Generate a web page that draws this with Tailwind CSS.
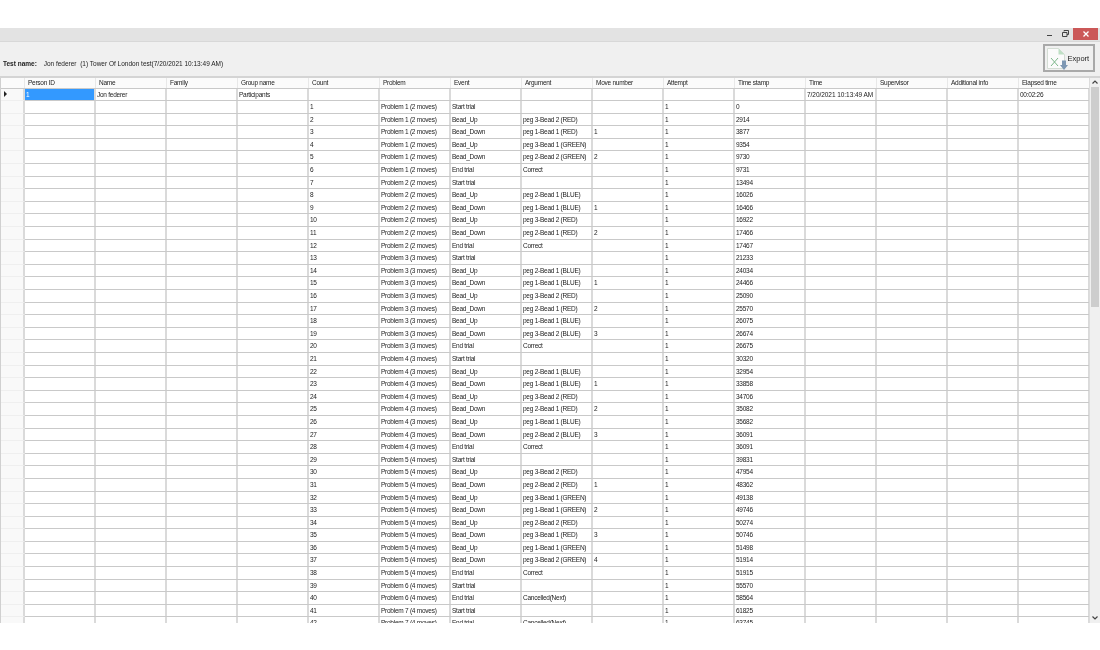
<!DOCTYPE html>
<html lang="en">

<head>
    <meta charset="UTF-8">
    <title>Export results</title>
    <script src="https://cdn.jsdelivr.net/npm/@tailwindcss/browser@4"></script>
</head>

<body class="bg-white text-[#222] font-['Liberation_Sans',sans-serif] overflow-hidden">
    <div class="h-[650px] w-[1100px] flex flex-col pt-[28px] blur-[0.3px]">
        <!-- Title bar -->
        <div class="h-[13px] bg-[#e3e3e3] flex items-start justify-end shrink-0">
            <div class="w-[12px] h-[11px] mr-[3px] flex items-center justify-center">
                <span class="block w-[5px] h-[1px] bg-[#444] mt-[3px]"></span>
            </div>
            <div class="w-[14px] h-[11px] flex items-center justify-center mr-[1px]">
                <svg width="7" height="7" viewBox="0 0 7 7" fill="none" stroke="#444" stroke-width="1"><path d="M2 1.500v-1h4.500v4h-1.500M0.500 2.500h4.500v4h-4.500z"/></svg>
            </div>
            <div class="w-[25px] h-[11.500px] mr-[2px] bg-[#cb5858] flex items-center justify-center">
                <svg width="6" height="6" viewBox="0 0 6 6" stroke="#fff" stroke-width="1.300"><path d="M0.500 0.500l5 5M5.500 0.500l-5 5"/></svg>
            </div>
        </div>

        <!-- Test name panel -->
        <div class="h-[35px] bg-[#f0f0f0] border-t border-[#d8d8d8] flex items-start justify-between shrink-0">
            <div class="pl-[3px] pt-[16.500px] text-[6.500px] leading-[10px]">
                <span class="font-bold mr-[5px]">Test name:</span> Jon federer&nbsp; (1) Tower Of London test(7/20/2021 10:13:49 AM)
            </div>
            <button class="w-[52px] h-[28px] mt-[2px] mr-[5px] border-2 border-[#a9a9a9] bg-[#f0f0f0] flex items-center pl-[2px] text-[7.500px]">
                <svg class="shrink-0" width="21" height="23" viewBox="0 0 21 23" fill="none">
                    <path d="M0.500 1.500h11l6 6v14h-17z" fill="#fbfbfb" stroke="#d4ddd4"/>
                    <path d="M11.500 1.500v6h6z" fill="#bfe0c5"/>
                    <path d="M4 11l7 8M11 11l-7 8" stroke="#7cb78a" stroke-width="1"/>
                    <path d="M15 13.500h4v4.500h2l-4 5l-4-5h2z" fill="#7d97b3"/>
                </svg>
                <span class="-ml-[0.500px] mt-[1px]">Export</span>
            </button>
        </div>

        <!-- Grid -->
        <div class="relative h-[546.500px] w-[1100px] shrink-0 overflow-hidden border-t-2 border-[#d4d4d4]">
            <div id="grid" class="w-[1089.500px] flex flex-col text-[6.500px] tracking-[-0.25px] border-l border-[#d0d0d0]"></div>
            <!-- Scrollbar -->
            <div class="absolute top-0 right-0 bottom-0 w-[11px] bg-[#f0f0f0] border-l border-[#dcdcdc] flex flex-col">
                <div class="h-[8.500px] flex items-center justify-center shrink-0">
                    <svg width="6" height="4" viewBox="0 0 6 4" fill="none" stroke="#444" stroke-width="1.200"><path d="M0.500 3.500l2.500-2.500l2.500 2.500"/></svg>
                </div>
                <div class="h-[220px] w-[8.500px] ml-[0.500px] bg-[#cdcdcd] shrink-0"></div>
                <div class="flex-1"></div>
                <div class="h-[8px] mb-[0.500px] flex items-center justify-center shrink-0">
                    <svg width="6" height="4" viewBox="0 0 6 4" fill="none" stroke="#444" stroke-width="1.200"><path d="M0.500 0.500l2.500 2.500l2.500-2.500"/></svg>
                </div>
            </div>
        </div>
    </div>

    <script>
        const headers = ['Person ID', 'Name', 'Family', 'Group name', 'Count', 'Problem', 'Event', 'Argument', 'Move number', 'Attempt', 'Time stamp', 'Time', 'Supervisor', 'Additional info', 'Elapsed time'];

        // problem, event, argument, move, time stamp
        const rows = [
            ['Problem 1 (2 moves)', 'Start trial', '', '', '0'],
            ['Problem 1 (2 moves)', 'Bead_Up', 'peg 3-Bead 2 (RED)', '', '2914'],
            ['Problem 1 (2 moves)', 'Bead_Down', 'peg 1-Bead 1 (RED)', '1', '3877'],
            ['Problem 1 (2 moves)', 'Bead_Up', 'peg 3-Bead 1 (GREEN)', '', '9354'],
            ['Problem 1 (2 moves)', 'Bead_Down', 'peg 2-Bead 2 (GREEN)', '2', '9730'],
            ['Problem 1 (2 moves)', 'End trial', 'Correct', '', '9731'],
            ['Problem 2 (2 moves)', 'Start trial', '', '', '13494'],
            ['Problem 2 (2 moves)', 'Bead_Up', 'peg 2-Bead 1 (BLUE)', '', '16026'],
            ['Problem 2 (2 moves)', 'Bead_Down', 'peg 1-Bead 1 (BLUE)', '1', '16466'],
            ['Problem 2 (2 moves)', 'Bead_Up', 'peg 3-Bead 2 (RED)', '', '16922'],
            ['Problem 2 (2 moves)', 'Bead_Down', 'peg 2-Bead 1 (RED)', '2', '17466'],
            ['Problem 2 (2 moves)', 'End trial', 'Correct', '', '17467'],
            ['Problem 3 (3 moves)', 'Start trial', '', '', '21233'],
            ['Problem 3 (3 moves)', 'Bead_Up', 'peg 2-Bead 1 (BLUE)', '', '24034'],
            ['Problem 3 (3 moves)', 'Bead_Down', 'peg 1-Bead 1 (BLUE)', '1', '24466'],
            ['Problem 3 (3 moves)', 'Bead_Up', 'peg 3-Bead 2 (RED)', '', '25090'],
            ['Problem 3 (3 moves)', 'Bead_Down', 'peg 2-Bead 1 (RED)', '2', '25570'],
            ['Problem 3 (3 moves)', 'Bead_Up', 'peg 1-Bead 1 (BLUE)', '', '26075'],
            ['Problem 3 (3 moves)', 'Bead_Down', 'peg 3-Bead 2 (BLUE)', '3', '26674'],
            ['Problem 3 (3 moves)', 'End trial', 'Correct', '', '26675'],
            ['Problem 4 (3 moves)', 'Start trial', '', '', '30320'],
            ['Problem 4 (3 moves)', 'Bead_Up', 'peg 2-Bead 1 (BLUE)', '', '32954'],
            ['Problem 4 (3 moves)', 'Bead_Down', 'peg 1-Bead 1 (BLUE)', '1', '33858'],
            ['Problem 4 (3 moves)', 'Bead_Up', 'peg 3-Bead 2 (RED)', '', '34706'],
            ['Problem 4 (3 moves)', 'Bead_Down', 'peg 2-Bead 1 (RED)', '2', '35082'],
            ['Problem 4 (3 moves)', 'Bead_Up', 'peg 1-Bead 1 (BLUE)', '', '35682'],
            ['Problem 4 (3 moves)', 'Bead_Down', 'peg 2-Bead 2 (BLUE)', '3', '36091'],
            ['Problem 4 (3 moves)', 'End trial', 'Correct', '', '36091'],
            ['Problem 5 (4 moves)', 'Start trial', '', '', '39831'],
            ['Problem 5 (4 moves)', 'Bead_Up', 'peg 3-Bead 2 (RED)', '', '47954'],
            ['Problem 5 (4 moves)', 'Bead_Down', 'peg 2-Bead 2 (RED)', '1', '48362'],
            ['Problem 5 (4 moves)', 'Bead_Up', 'peg 3-Bead 1 (GREEN)', '', '49138'],
            ['Problem 5 (4 moves)', 'Bead_Down', 'peg 1-Bead 1 (GREEN)', '2', '49746'],
            ['Problem 5 (4 moves)', 'Bead_Up', 'peg 2-Bead 2 (RED)', '', '50274'],
            ['Problem 5 (4 moves)', 'Bead_Down', 'peg 3-Bead 1 (RED)', '3', '50746'],
            ['Problem 5 (4 moves)', 'Bead_Up', 'peg 1-Bead 1 (GREEN)', '', '51498'],
            ['Problem 5 (4 moves)', 'Bead_Down', 'peg 3-Bead 2 (GREEN)', '4', '51914'],
            ['Problem 5 (4 moves)', 'End trial', 'Correct', '', '51915'],
            ['Problem 6 (4 moves)', 'Start trial', '', '', '55570'],
            ['Problem 6 (4 moves)', 'End trial', 'Cancelled(Next)', '', '58564'],
            ['Problem 7 (4 moves)', 'Start trial', '', '', '61825'],
            ['Problem 7 (4 moves)', 'End trial', 'Cancelled(Next)', '', '63745']
        ];

        const rowClass = 'flex h-[12.600px] shrink-0 border-b border-[#c9c9c9] bg-white';
        const cellClass = 'w-[71px] shrink-0 border-r-2 border-[#dadada] pl-[1.500px] leading-[12px] whitespace-nowrap overflow-hidden';
        const headCellClass = 'w-[71px] shrink-0 border-r border-[#e8e8e8] pl-[3.500px] leading-[10px] whitespace-nowrap overflow-hidden';
        const rowHeadClass = 'w-[23.500px] -mb-[1px] shrink-0 border-r-2 border-b border-r-[#dadada] border-b-[#efefef] bg-[#f9f9f9] flex items-center pl-[3px]';

        function addRow(cells, selected) {
            const row = document.createElement('div');
            row.className = rowClass;
            const head = document.createElement('div');
            head.className = rowHeadClass;
            if (selected) head.innerHTML = '<span class="block w-0 h-0 border-y-[3px] border-y-transparent border-l-[3.500px] border-l-[#222]"></span>';
            row.appendChild(head);
            cells.forEach((text, i) => {
                const cell = document.createElement('div');
                cell.className = cellClass;
                if (selected && i === 0) cell.className = cellClass + ' bg-[#3399ff] text-white';
                if (i === 11) cell.className = cellClass + ' tracking-[-0.05px]';
                cell.textContent = text;
                row.appendChild(cell);
            });
            document.getElementById('grid').appendChild(row);
        }

        // header row
        const headRow = document.createElement('div');
        headRow.className = 'flex h-[10.500px] shrink-0 border-b border-[#c9c9c9] bg-[#fbfbfb]';
        headRow.innerHTML = '<div class="w-[23.500px] shrink-0 border-r border-[#e8e8e8]"></div>';
        headers.forEach(text => {
            const cell = document.createElement('div');
            cell.className = headCellClass;
            cell.textContent = text;
            headRow.appendChild(cell);
        });
        document.getElementById('grid').appendChild(headRow);

        addRow(['1', 'Jon federer', '', 'Participants', '', '', '', '', '', '', '', '7/20/2021 10:13:49 AM', '', '', '00:02:26'], true);
        rows.forEach((r, i) => {
            addRow(['', '', '', '', String(i + 1), r[0], r[1], r[2], r[3], '1', r[4], '', '', '', ''], false);
        });
    </script>
</body>

</html>
